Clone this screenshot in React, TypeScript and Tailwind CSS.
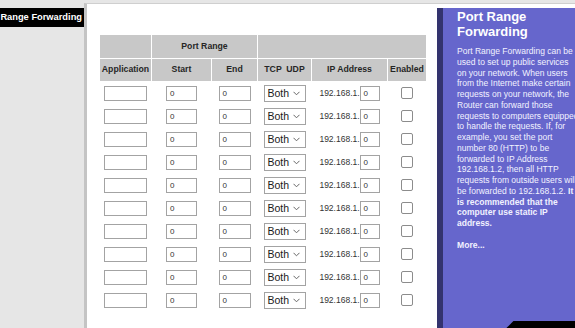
const rows = Array.from({ length: 10 }, (_, i) => i);

function SmallInput({ width }: { width: string }) {
  return (
    <div className={`${width} h-[15px] border border-[#a3a3a3] bg-white pl-[3px] text-[8px] leading-[13px] text-[#333]`}>
      0
    </div>
  );
}

function Cell({ children }: { children?: React.ReactNode }) {
  return <div className="flex items-center justify-center bg-white">{children}</div>;
}

function Head({ children, span }: { children?: React.ReactNode; span?: string }) {
  return (
    <div className={`flex items-center justify-center bg-[#c8c8c8] text-[8.7px] font-bold text-[#262626] ${span ?? ""}`}>
      {children}
    </div>
  );
}

export default function App() {
  return (
    <div className="flex h-[328px] w-[575px] overflow-hidden bg-[#e6e6e6] font-['Liberation_Sans',Arial,sans-serif]">
      {/* left nav stub */}
      <div className="w-[84px] shrink-0">
        <div className="mt-[8px] flex h-[19px] items-center justify-end overflow-hidden whitespace-nowrap bg-black pr-[2px] text-[9.3px] font-bold text-white">
          Port Range Forwarding
        </div>
      </div>

      <div className="mt-[3px] flex flex-1 border-t border-l-[3px] border-t-[#cfcfcf] border-l-[#c4c4c4] bg-white">
        {/* table */}
        <div className="w-[350px] shrink-0 pl-[13px] pt-[31px]">
          <div className="grid grid-cols-[51px_59px_45px_53px_75px_38px] grid-rows-[23px_22px_repeat(10,22px)] gap-px">
            <Head />
            <Head span="col-span-2">Port Range</Head>
            <Head span="col-span-3" />
            <Head>Application</Head>
            <Head>Start</Head>
            <Head>End</Head>
            <Head>
              <span className="whitespace-pre">TCP  UDP</span>
            </Head>
            <Head>IP Address</Head>
            <Head>Enabled</Head>
            {rows.map((i) => (
              <div key={i} className="contents">
                <Cell>
                  <div className="h-[15px] w-[43px] border border-[#a3a3a3] bg-white" />
                </Cell>
                <Cell>
                  <SmallInput width="w-[31px]" />
                </Cell>
                <Cell>
                  <SmallInput width="w-[32px]" />
                </Cell>
                <Cell>
                  <div className="flex h-[17px] w-[42px] items-center justify-between border border-[#a3a3a3] bg-white pl-[3px] pr-[5px] text-[10.5px] leading-none text-[#1a1a1a]">
                    Both
                    <svg width="7" height="5" viewBox="0 0 7 5" className="text-[#666]">
                      <path d="M0.5 0.8 L3.5 3.8 L6.5 0.8" fill="none" stroke="currentColor" strokeWidth="1" />
                    </svg>
                  </div>
                </Cell>
                <Cell>
                  <div className="flex items-center">
                    <span className="text-[8.5px] text-[#333]">192.168.1.</span>
                    <SmallInput width="w-[20px]" />
                  </div>
                </Cell>
                <Cell>
                  <div className="h-[12px] w-[12px] rounded-[2px] border border-[#8c8c8c] bg-white" />
                </Cell>
              </div>
            ))}
          </div>
        </div>

        {/* help panel */}
        <div className="mt-[4px] flex flex-1 flex-col border-l-[6px] border-l-[#33336e] bg-[#6666cc] text-white">
          <div className="flex-1 pl-[14px] pt-[1px]">
            <h2 className="text-[13px] font-bold leading-[15px]">
              Port Range
              <br />
              Forwarding
            </h2>
            <p className="mt-[7px] whitespace-nowrap text-[8.5px] leading-[10.75px] text-[#f2f2ff]">
              Port Range Forwarding can be
              <br />
              used to set up public services
              <br />
              on your network. When users
              <br />
              from the Internet make certain
              <br />
              requests on your network, the
              <br />
              Router can forward those
              <br />
              requests to computers equipped
              <br />
              to handle the requests. If, for
              <br />
              example, you set the port
              <br />
              number 80 (HTTP) to be
              <br />
              forwarded to IP Address
              <br />
              192.168.1.2, then all HTTP
              <br />
              requests from outside users will
              <br />
              be forwarded to 192.168.1.2. <b>It</b>
              <br />
              <b>is recommended that the</b>
              <br />
              <b>computer use static IP</b>
              <br />
              <b>address.</b>
            </p>
            <p className="mt-[10px] text-[8.6px] font-bold text-[#f2f2ff]">More...</p>
          </div>
          <div className="ml-auto h-[7px] w-[72px] bg-black [clip-path:polygon(7px_0,100%_0,100%_100%,0_100%)]" />
        </div>
      </div>
    </div>
  );
}
